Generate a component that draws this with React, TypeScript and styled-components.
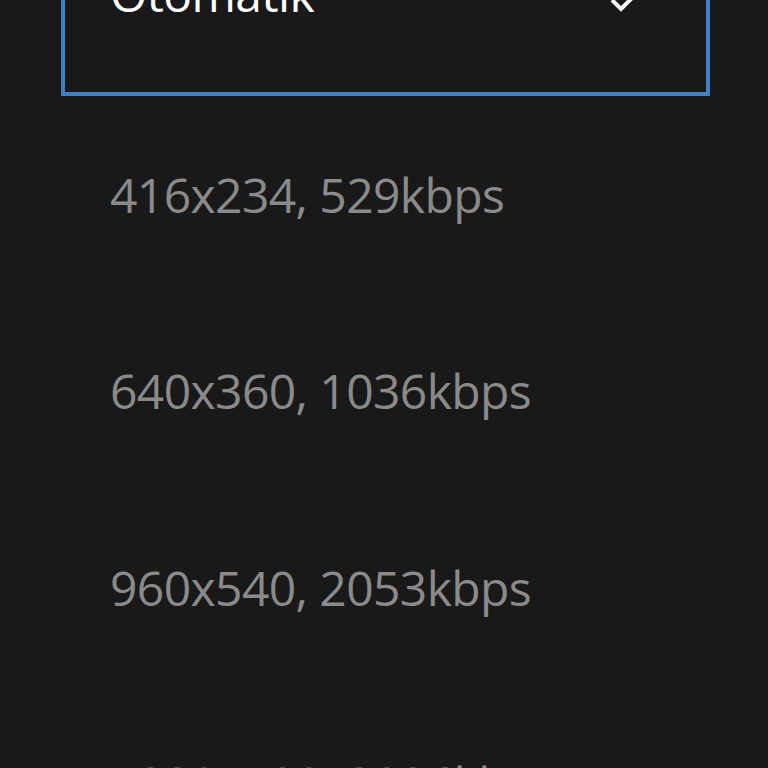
import React from 'react';
import styled, { createGlobalStyle } from 'styled-components';

const GlobalStyle = createGlobalStyle`
  html, body {
    margin: 0;
    padding: 0;
    background: #191919;
    overflow: hidden;
  }
  body {
    font-family: 'Open Sans', 'Noto Sans', sans-serif;
  }
`;

const Screen = styled.div`
  width: 768px;
  height: 768px;
  overflow: hidden;
  background: #191919;
`;

// the list is scrolled, so the focused first row sits half above the top edge
const List = styled.ul`
  list-style: none;
  display: flex;
  flex-direction: column;
  gap: 4.5px;
  margin: -96px 0 0 0;
  padding: 0;
`;

const Item = styled.li<{ $focused?: boolean }>`
  box-sizing: border-box;
  flex: none;
  display: flex;
  align-items: center;
  justify-content: space-between;
  width: 649px;
  height: 192px;
  margin-left: 61px;
  padding: 0 66px ${(p) => (p.$focused ? '12px' : '4px')} 45px;
  border: 4px solid ${(p) => (p.$focused ? '#3d82c9' : 'transparent')};
  font-size: 48px;
  letter-spacing: -0.6px;
  line-height: 1;
  color: ${(p) => (p.$focused ? '#ffffff' : '#8a8a8a')};
`;

const Label = styled.span`
  white-space: nowrap;
`;

const CheckMark = styled.svg`
  flex: none;
  margin-top: 14px;
`;

const Check = () => (
  <CheckMark width="32" height="24" viewBox="0 0 32 24" fill="none">
    <path d="M4 11 L13 20 L30 3" stroke="#ffffff" strokeWidth="4" />
  </CheckMark>
);

const options = [
  '416x234, 529kbps',
  '640x360, 1036kbps',
  '960x540, 2053kbps',
  '1280x720, 3096kbps',
];

export default function App() {
  return (
    <Screen>
      <GlobalStyle />
      <List>
        <Item $focused>
          <Label>Otomatik</Label>
          <Check />
        </Item>
        {options.map((o) => (
          <Item key={o}>
            <Label>{o}</Label>
          </Item>
        ))}
      </List>
    </Screen>
  );
}
